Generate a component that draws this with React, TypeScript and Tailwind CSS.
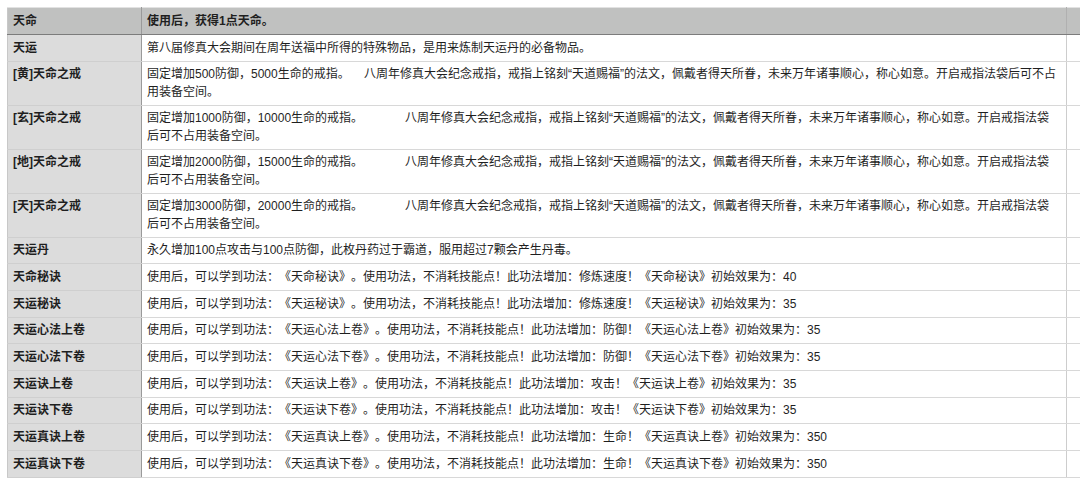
import React from "react";

const font = {
  fontFamily: '"Liberation Sans", "Noto Sans CJK SC", sans-serif',
};

type Row = { name: string; lines: React.ReactNode[] };

const ringRest =
  "八周年修真大会纪念戒指，戒指上铭刻“天道赐福”的法文，佩戴者得天所眷，未来万年诸事顺心，称心如意。开启戒指法袋";

const skill = (n: string, attr: string, v: string) =>
  `使用后，可以学到功法：《${n}》。使用功法，不消耗技能点！此功法增加：${attr}！《${n}》初始效果为：${v}`;

const rows: Row[] = [
  {
    name: "天运",
    lines: ["第八届修真大会期间在周年送福中所得的特殊物品，是用来炼制天运丹的必备物品。"],
  },
  {
    name: "[黄]天命之戒",
    lines: [
      <>
        <span className="inline-block w-[217px]">固定增加500防御，5000生命的戒指。</span>
        {ringRest + "后可不占"}
      </>,
      "用装备空间。",
    ],
  },
  {
    name: "[玄]天命之戒",
    lines: [
      <>
        <span className="inline-block w-[258px]">固定增加1000防御，10000生命的戒指。</span>
        {ringRest}
      </>,
      "后可不占用装备空间。",
    ],
  },
  {
    name: "[地]天命之戒",
    lines: [
      <>
        <span className="inline-block w-[258px]">固定增加2000防御，15000生命的戒指。</span>
        {ringRest}
      </>,
      "后可不占用装备空间。",
    ],
  },
  {
    name: "[天]天命之戒",
    lines: [
      <>
        <span className="inline-block w-[258px]">固定增加3000防御，20000生命的戒指。</span>
        {ringRest}
      </>,
      "后可不占用装备空间。",
    ],
  },
  {
    name: "天运丹",
    lines: ["永久增加100点攻击与100点防御，此枚丹药过于霸道，服用超过7颗会产生丹毒。"],
  },
  { name: "天命秘诀", lines: [skill("天命秘诀", "修炼速度", "40")] },
  { name: "天运秘诀", lines: [skill("天运秘诀", "修炼速度", "35")] },
  { name: "天运心法上卷", lines: [skill("天运心法上卷", "防御", "35")] },
  { name: "天运心法下卷", lines: [skill("天运心法下卷", "防御", "35")] },
  { name: "天运诀上卷", lines: [skill("天运诀上卷", "攻击", "35")] },
  { name: "天运诀下卷", lines: [skill("天运诀下卷", "攻击", "35")] },
  { name: "天运真诀上卷", lines: [skill("天运真诀上卷", "生命", "350")] },
  { name: "天运真诀下卷", lines: [skill("天运真诀下卷", "生命", "350")] },
];

export default function App() {
  return (
    <div
      className="w-[1080px] h-[489px] overflow-hidden bg-white pt-[7px] pl-[7px] text-[#1f1f1f] text-[12px] leading-[17.3px] [text-spacing-trim:space-all]"
      style={font}
    >
      <table className="table-fixed border-collapse w-[1090px]">
        <colgroup>
          <col className="w-[134px]" />
          <col className="w-[925px]" />
          <col />
        </colgroup>
        <thead>
          <tr className="bg-[#c0c1c0]">
            <th className="text-left font-bold align-top pl-[5px] pt-[4.7px] pb-[4px] border-t border-t-[#e2e2e2] border-l border-l-[#c8c8c8] border-r border-r-[#9a9a9a] border-b border-b-[#7c7c7c]">
              天命
            </th>
            <th className="text-left font-bold align-top pl-[5px] pt-[4.7px] pb-[4px] border-t border-t-[#e2e2e2] border-r border-r-[#b0b0b0] border-b border-b-[#7c7c7c] whitespace-nowrap">
              使用后，获得1点天命。
            </th>
            <th className="border-t border-t-[#e2e2e2] border-b border-b-[#7c7c7c]" />
          </tr>
        </thead>
        <tbody>
          {rows.map((r) => (
            <tr key={r.name}>
              <td className="bg-[#dcdcdc] font-bold align-top pl-[5px] pt-[4.7px] pb-[3.7px] border-l border-l-[#c8c8c8] border-r border-r-[#9a9a9a] border-b border-b-[#cfcfcf] whitespace-nowrap">
                {r.name}
              </td>
              <td className="align-top pl-[5px] pt-[4.7px] pb-[3.7px] border-r border-r-[#cdcdcd] border-b border-b-[#d8d8d8] whitespace-nowrap">
                {r.lines.map((l, i) => (
                  <div key={i}>{l}</div>
                ))}
              </td>
              <td className="border-b border-b-[#d8d8d8]" />
            </tr>
          ))}
        </tbody>
      </table>
    </div>
  );
}
